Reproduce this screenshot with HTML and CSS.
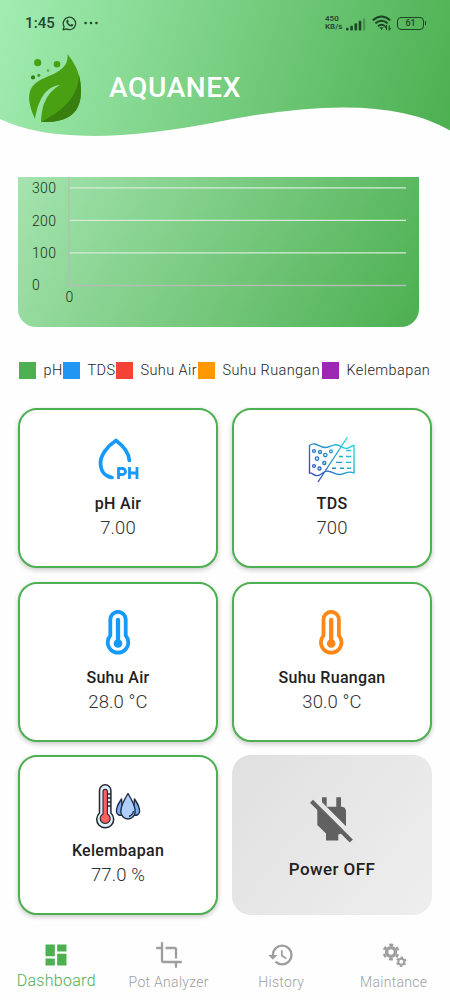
FILE: index.html
```
<!DOCTYPE html>
<html lang="id">
<head>
<meta charset="utf-8">
<title>Aquanex</title>
<link rel="stylesheet" href="styles.css">
</head>
<body>
<div class="app">
  <header class="header">
    <svg class="wave" width="450" height="140" viewBox="0 0 450 140">
      <defs><linearGradient id="hg" gradientUnits="userSpaceOnUse" x1="0" y1="0" x2="450" y2="136"><stop offset="0" stop-color="#a2edb2"/><stop offset="1" stop-color="#4caf50"/></linearGradient></defs>
      <path fill="url(#hg)" d="M0 0H450V130.500Q382 90 225 120.500Q68 152 0 119Z"/>
    </svg>
    <div class="status">
      <span class="clock">1:45</span>
      <svg class="wa" width="15" height="15" viewBox="0 0 15 15"><path d="M1.200 13.800l.9-3.200A6.200 6.200 0 1 1 4.500 12.900Z" fill="none" stroke="#24472e" stroke-width="1.300" stroke-linejoin="round"/><path d="M4.600 4.300c.7-1 1.400-.8 1.600-.2l.5 1.200c.1.400-.5.800-.6 1.100.5 1.100 1.400 1.900 2.500 2.300.4 0 .8-.9 1.200-.8l1.300.7c.4.300.1 1.300-.6 1.700C7.900 11.600 3.200 7.500 4.600 4.300Z" fill="#24472e"/></svg>
      <svg class="dots" width="14" height="4" viewBox="0 0 14 4" fill="#24472e"><circle cx="1.600" cy="2" r="1.300"/><circle cx="7" cy="2" r="1.300"/><circle cx="12.400" cy="2" r="1.300"/></svg>
      <span class="rate">450<br>KB/s</span>
      <svg class="signal" width="20" height="13" viewBox="0 0 20 13" fill="#1d4425"><rect x="0" y="9.700" width="2.600" height="2.800" rx="1"/><rect x="4.300" y="7.700" width="2.600" height="4.800" rx="1"/><rect x="8.500" y="5.300" width="2.600" height="7.200" rx="1"/><rect x="12.700" y="2.800" width="2.600" height="9.700" rx="1"/><rect x="17" y=".5" width="2.200" height="12" rx=".8" opacity=".35"/></svg>
      <svg class="wifi" width="20" height="16" viewBox="0 0 20 16"><g fill="none" stroke="#1d4425" stroke-width="1.900"><path d="M.8 5.300Q9.500-2.300 18.200 5.300"/><path d="M3.400 8.300Q9.500 3 15.600 8.300"/><path d="M6 11.200Q9.500 8.200 13 11.200"/></g><path d="M7.600 12.300h3.800L9.500 15Z" fill="#1d4425"/><path d="M14.500 15v-4.200l-1.600 1.800M17.200 10.500v4.300l1.500-1.800" fill="none" stroke="#1d4425" stroke-width="1.100"/></svg>
      <span class="battery"><span>61</span></span>
    </div>
    <div class="brand">
      <svg width="54" height="72" viewBox="0 0 54 72">
        <g fill="#49a013"><circle cx="9.700" cy="9.700" r="3.600"/><circle cx="29" cy="11.200" r="3.300"/><circle cx="10.800" cy="22.300" r="1.600"/><circle cx="20" cy="17.500" r="1.300" opacity=".7"/></g><circle cx="5" cy="24.400" r="2.100" fill="#347c16"/>
        <path d="M7 66C-3 44 0 33 14 26C29 20 41 15 39.500 1C49 13 53 24 53 38C53 61 39 70 13 69C14 50 19 40 32 32C18 33 10 47 7 66Z" fill="#49a013"/>
        <path d="M51 22C52.500 28 53 33 53 38C53 61 39 70 13 69C34 58 50 45 51 22Z" fill="#397f10"/>
      </svg>
      <h1>AQUANEX</h1>
    </div>
  </header>

  <section class="chart">
    <svg width="401" height="150" viewBox="0 0 401 150">
      <g stroke="#d5ebd7" stroke-width="1.300"><path d="M51 10.800H388M51 43.300H388M51 75.900H388"/></g>
      <path d="M51 0V108.500H388" fill="none" stroke="#b3bdb3" stroke-width="1.300"/>
      <g class="axis"><text x="14" y="16">300</text><text x="14" y="48.500">200</text><text x="14" y="81.300">100</text><text x="14" y="113">0</text><text x="47.500" y="124.500">0</text></g>
    </svg>
  </section>

  <ul class="legend">
    <li class="ph">pH</li><li class="tds">TDS</li><li class="water">Suhu Air</li><li class="room">Suhu Ruangan</li><li class="hum">Kelembapan</li>
  </ul>

  <main class="grid">
    <article class="card">
      <svg class="icon" width="48" height="48" viewBox="0 0 48 48"><path d="M35.300 24.500C35 16 28 9 22 4.500C13.500 10 6.500 19 6.500 27C6.500 35 11 40.500 18 41.500" fill="none" stroke="#1599fa" stroke-width="3.700" stroke-linecap="round" stroke-linejoin="round"/><path d="M24.500 43V32.500h4a2.600 2.600 0 0 1 0 6h-4M35.500 31v12M43 31v12M35.500 37H43" fill="none" stroke="#1599fa" stroke-width="2.800" stroke-linejoin="round"/></svg>
      <h2>pH Air</h2><p>7.00</p>
    </article>
    <article class="card">
      <svg class="icon" width="48" height="48" viewBox="0 0 48 48">
        <defs><linearGradient id="tg" gradientUnits="userSpaceOnUse" x1="2" y1="40" x2="44" y2="8"><stop offset="0" stop-color="#3443be"/><stop offset=".5" stop-color="#258fc7"/><stop offset="1" stop-color="#19dcdf"/></linearGradient></defs>
        <g fill="none" stroke="url(#tg)" stroke-width="1.350"><path d="M1.500 37V9.500C8 5 11 11.500 17 11.500S26 6 33 10.500S41 10 46 9.500V37C39 34 37 39 31 38.500S21 32 14 37.500S5 36 1.500 37ZM10 46L39.500 1"/><circle cx="6" cy="15" r="1.400"/><circle cx="12" cy="16" r="1.500"/><circle cx="17.300" cy="19" r="1.700"/><circle cx="23" cy="15.300" r="1.400"/><circle cx="9" cy="22.500" r="1.700"/><circle cx="16.300" cy="27" r="1.500"/><circle cx="6" cy="30" r="1.400"/><circle cx="11.500" cy="32.500" r="1.500"/><path d="M38 14.500h5M31 20.500h4M38 20.500h5M28 26.300h6M38 26.300h5M24 32.200h4M32 32.200h4M39 32.200h4"/></g>
      </svg>
      <h2>TDS</h2><p>700</p>
    </article>
    <article class="card">
      <svg class="icon" width="48" height="48" viewBox="0 0 48 48"><path d="M16.300 25.500V9.500a7.700 7.700 0 0 1 15.400 0v16a10.300 10.300 0 1 1-15.400 0Z" fill="none" stroke="#1599fa" stroke-width="3.800"/><path d="M24 10V34" stroke="#1599fa" stroke-width="4.300" stroke-linecap="round"/><circle cx="24" cy="33.500" r="4.300" fill="#1599fa"/></svg>
      <h2>Suhu Air</h2><p>28.0 °C</p>
    </article>
    <article class="card">
      <svg class="icon" width="48" height="48" viewBox="0 0 48 48"><path d="M15.500 25.500V9.500a7.700 7.700 0 0 1 15.400 0v16a10.300 10.300 0 1 1-15.400 0Z" fill="none" stroke="#ff8717" stroke-width="3.800"/><path d="M23.200 10V34" stroke="#ff8717" stroke-width="4.300" stroke-linecap="round"/><circle cx="23.200" cy="33.500" r="4.300" fill="#ff8717"/></svg>
      <h2>Suhu Ruangan</h2><p>30.0 °C</p>
    </article>
    <article class="card">
      <svg class="icon" width="48" height="48" viewBox="0 0 48 48"><path d="M5.500 30V7.500a5.700 5.700 0 0 1 11.400 0V30a8.500 8.500 0 1 1-11.400 0Z" fill="#e0efff" stroke="#25272f" stroke-width="1.500"/><path d="M9 31V8.500a2.200 2.200 0 0 1 4.400 0V31a5 5 0 1 1-4.400 0Z" fill="#fd605f" stroke="#25272f" stroke-width="1.100"/><path d="M13.500 11h3M13.500 15h3M13.500 19h3M13.500 23h3" stroke="#25272f" stroke-width="1.300"/><g fill="#78adf4" stroke="#202b42" stroke-width="1.400" stroke-linejoin="round"><path d="M27.500 16C24 21 22 26 22.500 29C23 32 26 33 29 32Z"/><path d="M40.500 16C44 21 46 26 45.500 29C45 32 42 33 39 32Z"/><path d="M34 10.500C30 17 26.800 23 26.800 28.500a7.200 7.500 0 0 0 14.400 0C41.200 23 38 17 34 10.500Z" fill="#add0ff"/><path d="M35 33.500Q39 32 39.500 28" fill="none"/></g></svg>
      <h2>Kelembapan</h2><p>77.0 %</p>
    </article>
    <article class="card off">
      <svg class="icon" width="48" height="48" viewBox="0 0 48 48" fill="#616161"><path d="M14 1.300H18.700V10.800H28.300V1.300H33V10.800Q38 11 38 15.500V30.300L14 6.300ZM9.300 12L34.500 37.200L30.300 38.500V44.500H18V37.500L9.300 29Z"/><path d="M3.500 5.200L43.300 45" stroke="#616161" stroke-width="4.300"/></svg>
      <h2>Power OFF</h2>
    </article>
  </main>

  <nav class="nav">
    <a class="tab active"><svg width="28" height="28" viewBox="0 0 24 24"><path d="M3 13h8V3H3v10zm0 8h8v-6H3v6zm10 0h8V11h-8v10zm0-18v6h8V3h-8z"/></svg><span>Dashboard</span></a>
    <a class="tab"><svg width="28" height="28" viewBox="0 0 24 24"><path d="M17 15h2V7c0-1.100-.9-2-2-2H9v2h8v8zM7 17V1H5v4H1v2h4v10c0 1.100.9 2 2 2h10v4h2v-4h4v-2H7z"/></svg><span>Pot Analyzer</span></a>
    <a class="tab"><svg width="28" height="28" viewBox="0 0 24 24"><path d="M13 3a9 9 0 0 0-9 9H1l3.890 3.890.07.14L9 12H6a7 7 0 1 1 7 7c-1.930 0-3.680-.79-4.940-2.060l-1.420 1.420A8.954 8.954 0 0 0 13 21a9 9 0 0 0 0-18zm-1 5v5l4.280 2.540.72-1.210-3.500-2.080V8H12z"/></svg><span>History</span></a>
    <a class="tab"><svg width="28" height="28" viewBox="0 0 28 28"><g fill="none" stroke="#9e9e9e"><circle cx="11" cy="11" r="4.400" stroke-width="3.400"/><circle cx="11" cy="11" r="7.200" stroke-width="2.500" stroke-dasharray="3.770 3.770" stroke-dashoffset="1.880" transform="rotate(30 11 11)"/><circle cx="21.300" cy="20.700" r="3" stroke-width="2"/><circle cx="21.300" cy="20.700" r="4.500" stroke-width="1.500" stroke-dasharray="2.356 2.356" stroke-dashoffset="1.180" transform="rotate(30 21.300 20.700)"/></g></svg><span>Maintance</span></a>
  </nav>
</div>
</body>
</html>
```
FILE: styles.css
```
* { box-sizing: border-box; }
body { margin: 0; background: #fefefe; font-family: Roboto, "Liberation Sans", sans-serif; color: #212121; }
h1, h2, p, ul { margin: 0; padding: 0; }
svg { display: block; flex: none; }
.app { width: 450px; height: 1000px; display: flex; flex-direction: column; overflow: hidden; }

.header { position: relative; height: 177px; flex: none; }
.wave { position: absolute; left: 0; top: 0; }
.status { position: relative; display: flex; align-items: center; height: 46px; padding: 0 23px 0 25px; color: #24472e; }
.clock { width: 37px; font-size: 15px; font-weight: 500; letter-spacing: .1px; white-space: nowrap; }
.dots { margin-left: 7px; }
.rate { margin-left: 227px; width: 21px; font-size: 8px; line-height: 8px; font-weight: 600; white-space: nowrap; }
.signal { margin-top: 2px; }
.wifi { margin-left: 6px; margin-right: 5px; }
.battery { position: relative; width: 27px; height: 13px; border: 1.5px solid #1d4425; border-radius: 4px; font-size: 9px; line-height: 11px; font-weight: 500; text-align: center; }
.battery::after { content: ""; position: absolute; right: -3px; top: 3px; width: 1.5px; height: 4px; background: #1d4425; }
.brand { position: relative; display: flex; padding: 7px 0 0 28px; }
.brand h1 { margin: 19px 0 0 27px; color: #fff; font-size: 28px; line-height: 32px; font-weight: 500; letter-spacing: .65px; }

.chart { width: 401px; height: 150px; flex: none; margin-left: 18px; border-radius: 0 0 18px 18px; background: linear-gradient(120deg, #ade9b8, #4caf50) bottom / 100% 230px; }
.axis text { font-size: 14px; font-weight: 300; letter-spacing: .35px; fill: #16331b; }

.legend { display: flex; list-style: none; margin: 33px 0 0 19px; height: 20px; flex: none; }
.legend li { display: flex; align-items: center; font-size: 14.5px; font-weight: 300; letter-spacing: .4px; color: #1c1c1c; white-space: nowrap; }
.legend li::before { content: ""; width: 17px; height: 17px; margin-right: 7.5px; flex: none; }
.ph { width: 44px; } .ph::before { background: #4caf50; }
.tds { width: 53px; } .tds::before { background: #2196f3; }
.water { width: 82px; } .water::before { background: #f44336; }
.room { width: 124px; } .room::before { background: #ff9800; }
.hum::before { background: #9c27b0; }

.grid { display: grid; grid-template-columns: 200px 200px; grid-auto-rows: 160px; gap: 13.5px 14px; margin: 28px 0 0 18px; flex: none; }
.card { display: flex; flex-direction: column; align-items: center; padding-top: 26px; background: #fff; border: 2.5px solid #4caf50; border-radius: 19px; box-shadow: 0 2px 5px rgba(0,0,0,.22); }
.card h2 { margin-top: 9px; font-size: 16px; line-height: 22px; font-weight: 500; letter-spacing: .3px; }
.card p { font-size: 18.500px; line-height: 26px; font-weight: 300; color: #303030; letter-spacing: .1px; }
.off { border: 0; padding-top: 41px; background: linear-gradient(129deg, #e0e0e0, #eee); box-shadow: none; }
.off h2 { margin-top: 14px; font-size: 17px; letter-spacing: .4px; }

.nav { display: grid; grid-template-columns: repeat(4, 1fr); margin-top: 26px; }
.tab { display: flex; flex-direction: column; align-items: center; font-size: 14px; color: #9e9e9e; fill: #9e9e9e; letter-spacing: .3px; }
.tab span { margin-top: 4px; line-height: 18px; font-weight: 300; }
.tab.active { color: #4caf50; fill: #4caf50; font-size: 16px; }
.tab.active span { margin-top: 3px; }
```
